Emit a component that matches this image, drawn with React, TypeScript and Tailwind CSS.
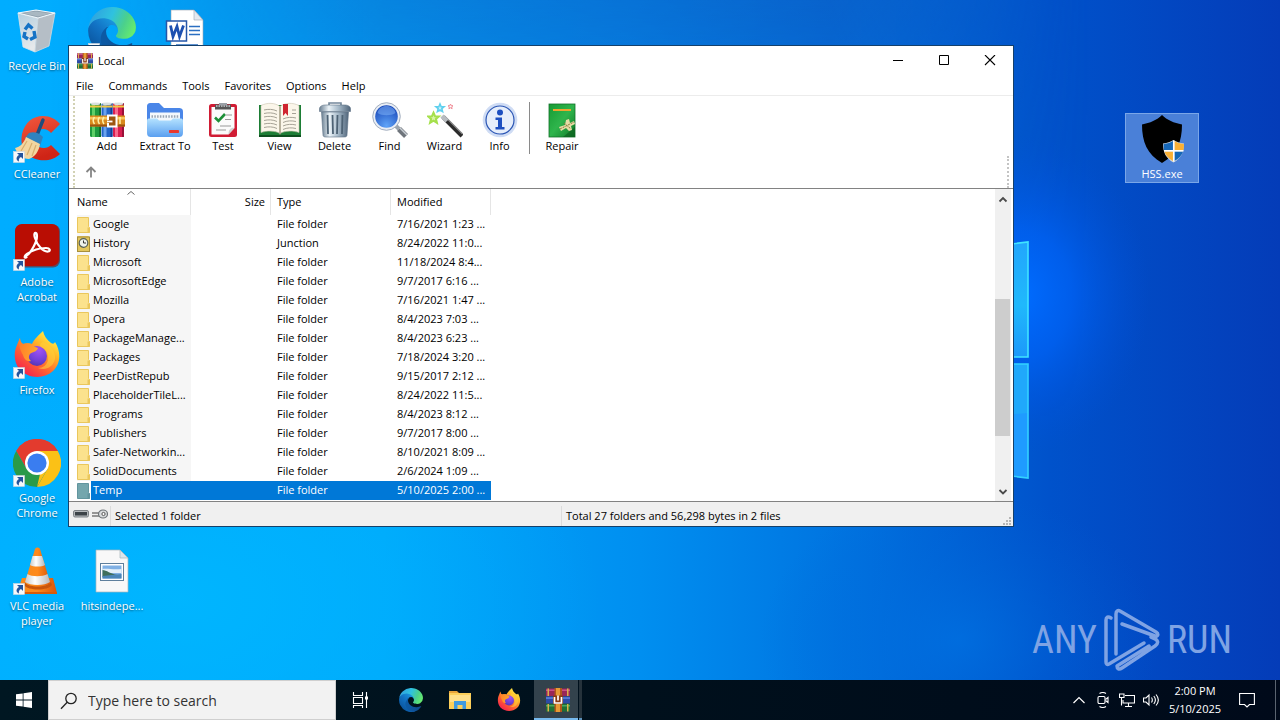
import React from "react";

type IconProps = { className?: string };

/* ---------- Wallpaper ---------- */

function Wallpaper() {
  return (
    <svg
      className="absolute inset-0 h-full w-full"
      viewBox="0 0 1280 720"
      preserveAspectRatio="xMidYMid slice"
      aria-hidden="true"
    >
      <defs>
        <linearGradient id="wall-base" x1="0" y1="0" x2="1" y2="0">
          <stop offset="0" stopColor="#00adff" />
          <stop offset="0.3" stopColor="#00a8fb" />
          <stop offset="0.5" stopColor="#008ff0" />
          <stop offset="0.68" stopColor="#0070de" />
          <stop offset="0.82" stopColor="#0052cb" />
          <stop offset="1" stopColor="#043cb8" />
        </linearGradient>
        <linearGradient id="wall-top" x1="0" y1="0" x2="0" y2="1">
          <stop offset="0" stopColor="#1050b8" stopOpacity="0.75" />
          <stop offset="0.35" stopColor="#1050b8" stopOpacity="0.2" />
          <stop offset="0.6" stopColor="#1050b8" stopOpacity="0" />
        </linearGradient>
        <linearGradient id="wall-mask-x" x1="0" y1="0" x2="1" y2="0">
          <stop offset="0.04" stopColor="#000" />
          <stop offset="0.3" stopColor="#888" />
          <stop offset="0.65" stopColor="#aaa" />
          <stop offset="0.85" stopColor="#000" />
        </linearGradient>
        <mask id="wall-mask">
          <rect width="1280" height="720" fill="url(#wall-mask-x)" />
        </mask>
        <radialGradient id="wall-glow">
          <stop offset="0" stopColor="#006cff" />
          <stop offset="0.4" stopColor="#0062f6" stopOpacity="0.75" />
          <stop offset="1" stopColor="#0050d8" stopOpacity="0" />
        </radialGradient>
        <radialGradient id="wall-low">
          <stop offset="0" stopColor="#00b8ff" stopOpacity="0.8" />
          <stop offset="1" stopColor="#00b4ff" stopOpacity="0" />
        </radialGradient>
        <radialGradient id="wall-floor">
          <stop offset="0" stopColor="#0074e4" stopOpacity="0.6" />
          <stop offset="1" stopColor="#0060d4" stopOpacity="0" />
        </radialGradient>
        <linearGradient id="pane-top" x1="0" y1="0" x2="0" y2="1">
          <stop offset="0" stopColor="#22a6fc" />
          <stop offset="0.55" stopColor="#20b8fc" />
          <stop offset="1" stopColor="#1c98fa" />
        </linearGradient>
      </defs>
      <rect width="1280" height="720" fill="url(#wall-base)" />
      <rect width="1280" height="720" fill="url(#wall-top)" mask="url(#wall-mask)" />
      <ellipse cx="180" cy="600" rx="420" ry="260" fill="url(#wall-low)" />
      <ellipse cx="960" cy="640" rx="200" ry="150" fill="url(#wall-floor)" />
      <ellipse cx="1020" cy="295" rx="130" ry="160" fill="url(#wall-glow)" />
      <path d="M860 262 1028 242V357H860Z" fill="url(#pane-top)" />
      <path d="M860 262 1028 242V357H860" fill="none" stroke="#3fe4ff" strokeWidth="1.6" />
      <path d="M860 364H1028V478L860 458Z" fill="#1f9bff" />
      <path d="M860 364H1028V413L860 426Z" fill="#20a8fb" />
      <path d="M860 364H1028V478L860 458" fill="none" stroke="#32d2ff" strokeWidth="1.6" />
    </svg>
  );
}

/* ---------- Application icons ---------- */

function EdgeIcon({ className }: IconProps) {
  return (
    <svg className={className} viewBox="4.6 4.9 256 257" aria-hidden="true">
      <defs>
        <linearGradient id="edge-a" x1="0.2" y1="0.6" x2="1" y2="0.6">
          <stop offset="0" stopColor="#0c59a4" />
          <stop offset="1" stopColor="#114a8b" />
        </linearGradient>
        <linearGradient id="edge-b" x1="0.9" y1="0.1" x2="0.3" y2="0.9">
          <stop offset="0" stopColor="#1b9de2" />
          <stop offset="0.5" stopColor="#1272c4" />
          <stop offset="1" stopColor="#0a56a0" />
        </linearGradient>
        <linearGradient id="edge-c" x1="0" y1="0.3" x2="1" y2="0.6">
          <stop offset="0" stopColor="#2f9fe0" />
          <stop offset="0.45" stopColor="#2fc2df" />
          <stop offset="0.75" stopColor="#4bd08c" />
          <stop offset="1" stopColor="#66eb6e" />
        </linearGradient>
      </defs>
      <path
        fill="url(#edge-a)"
        d="M235.68 199.15a93.73 93.73 0 0 1-10.54 4.71 101.87 101.87 0 0 1-35.9 6.46c-47.32 0-88.54-32.55-88.54-74.32A31.48 31.48 0 0 1 117.13 108.7c-42.8 1.8-53.8 46.4-53.8 72.53 0 73.88 68.09 81.37 82.76 81.37 7.91 0 19.84-2.3 27-4.56l1.31-.44a128.34 128.34 0 0 0 66.6-52.8 4 4 0 0 0-5.32-5.65z"
      />
      <path
        fill="url(#edge-b)"
        d="M110.34 246.34A79.2 79.2 0 0 1 87.6 225a80.72 80.72 0 0 1 29.53-120c3.12-1.47 8.45-4.13 15.54-4a32.35 32.35 0 0 1 25.69 13 31.88 31.88 0 0 1 6.36 18.66c0-.21 24.46-79.6-80-79.6-43.9 0-80 41.66-80 78.21a130.15 130.15 0 0 0 12.11 56 128 128 0 0 0 156.38 67.11 75.55 75.55 0 0 1-62.78-8z"
      />
      <path
        fill="url(#edge-c)"
        d="M156.94 153.78c-.81 1.05-3.3 2.5-3.3 5.66 0 2.61 1.7 5.12 4.72 7.23 14.38 10 41.49 8.68 41.56 8.68a59.56 59.56 0 0 0 30.27-8.35A61.38 61.38 0 0 0 260.63 114c.26-22.41-8-37.31-11.34-43.91-21.19-41.45-66.93-65.29-116.67-65.29a128 128 0 0 0-128 126.2c.48-36.54 36.8-66.05 80-66.05 3.5 0 23.46.34 42 10.07 16.34 8.58 24.9 18.94 30.85 29.21 6.18 10.67 7.28 24.15 7.28 29.52s-2.74 13.33-7.8 19.9z"
      />
    </svg>
  );
}

function FirefoxIcon({ className }: IconProps) {
  return (
    <svg className={className} viewBox="0 0 48 48" aria-hidden="true">
      <defs>
        <linearGradient id="fx-body" x1="0.85" y1="0.1" x2="0.2" y2="0.95">
          <stop offset="0" stopColor="#fff04a" />
          <stop offset="0.3" stopColor="#ffb627" />
          <stop offset="0.6" stopColor="#ff6a2f" />
          <stop offset="1" stopColor="#f5204f" />
        </linearGradient>
        <radialGradient id="fx-globe" cx="0.6" cy="0.2" r="0.9">
          <stop offset="0" stopColor="#a152f5" />
          <stop offset="0.6" stopColor="#7040d8" />
          <stop offset="1" stopColor="#4c34a8" />
        </radialGradient>
        <linearGradient id="fx-flame" x1="0" y1="0" x2="1" y2="0.4">
          <stop offset="0" stopColor="#ff7a28" />
          <stop offset="1" stopColor="#ffa52c" />
        </linearGradient>
      </defs>
      <path
        fill="url(#fx-body)"
        d="M7 7C7 10 8 12 10 13c3-1 6-1 9 0C21 8 26 4 30 0c1 5 4 9 8 12 2 1 3 1 4-1 6 9 6 22-2 29-10 9-25 7-33-1C0 31 1 20 4 14c1-3 2-5 3-7Z"
      />
      <circle cx="24" cy="25" r="10" fill="url(#fx-globe)" />
      <path
        fill="url(#fx-flame)"
        d="M7 7c0 3 1 5 3 6 3-1 6-1 9 0 1 2 3 3 6 4-1 4-6 4-8 6-2 3-1 5 1 7-4 1-7-2-8-6-3-5-5-11-3-17Z"
      />
      <path fill="#ffcf3a" d="M28 16c5 2 8 7 7 13-1 5-5 8-10 8 8 3 15-1 17-9 1-7-4-13-12-17-3 1-4 3-2 5Z" opacity="0.6" />
    </svg>
  );
}

function ChromeIcon({ className }: IconProps) {
  return (
    <svg className={className} viewBox="0 0 48 48" aria-hidden="true">
      <path fill="#e33b2e" d="M24 24 3.2 12A24 24 0 0 1 44.8 12L24 12Z" />
      <path fill="#e33b2e" d="M3.2 12A24 24 0 0 1 44.8 12H24L13.6 30Z" />
      <path fill="#fbc116" d="M44.8 12A24 24 0 0 1 24 48L34.4 30 24 12Z" />
      <path fill="#2a9a48" d="M24 48A24 24 0 0 1 3.2 12L13.6 30 34.4 30Z" />
      <path fill="#fbc116" d="M34.4 30 24 48 30 22Z" />
      <circle cx="24" cy="24" r="12" fill="#fff" />
      <circle cx="24" cy="24" r="9.6" fill="#3a7df0" />
    </svg>
  );
}

function AcrobatIcon({ className }: IconProps) {
  return (
    <svg className={className} viewBox="0 0 48 48" aria-hidden="true">
      <rect x="2" y="1.5" width="45" height="43" rx="7" fill="#8e0d02" opacity="0.6" />
      <rect x="2" y="1" width="44" height="42" rx="7" fill="#b90d03" />
      <path
        d="M13 33C17 31 26 17 23.500 10.500C22 8.500 20.500 11 22 15C24 22 30 29 35 28.500C38 28 37 25 33 25C26 25 19 27.500 14 31C10 34 12 36 14 33.500"
        fill="none"
        stroke="#fff"
        strokeWidth="2.2"
        strokeLinejoin="round"
      />
    </svg>
  );
}

function CCleanerIcon({ className }: IconProps) {
  return (
    <svg className={className} viewBox="0 0 48 48" aria-hidden="true">
      <defs>
        <linearGradient id="cc-red" x1="0" y1="0" x2="0.3" y2="1">
          <stop offset="0" stopColor="#f2593e" />
          <stop offset="1" stopColor="#cf2416" />
        </linearGradient>
      </defs>
      <path
        fill="url(#cc-red)"
        d="M47 9 38 18C34 13 27 13 24 17c-4 5-3 12 2 15 5 2 9 1 12-2l9 9C40 46 29 47 20 43 10 38 7 29 9 19 12 7 20 1 30 1c7 0 13 3 17 8Z"
      />
      <path d="M30 5 24 20" stroke="#214d7c" strokeWidth="3.4" strokeLinecap="round" />
      <path fill="#2f83be" d="M16 18c5-2 10 0 14 4l-3 9-15-8Z" />
      <path fill="#f3d6a0" d="M13 22 27 29C26 36 22 42 16 44 10 44 5 40 2 33c5-1 9-5 11-11Z" />
      <path d="M14 26 8 36M19 28l-5 12M23 30l-4 11" stroke="#d9ae6c" strokeWidth="1.2" />
    </svg>
  );
}

function VlcIcon({ className }: IconProps) {
  return (
    <svg className={className} viewBox="0 0 48 48" aria-hidden="true">
      <defs>
        <linearGradient id="vlc-o" x1="0" y1="0" x2="1" y2="0">
          <stop offset="0" stopColor="#f78a1d" />
          <stop offset="0.5" stopColor="#ff8a1c" />
          <stop offset="1" stopColor="#d9560a" />
        </linearGradient>
        <linearGradient id="vlc-w" x1="0" y1="0" x2="1" y2="0">
          <stop offset="0" stopColor="#c9c9c9" />
          <stop offset="0.4" stopColor="#fff" />
          <stop offset="1" stopColor="#b8b8b8" />
        </linearGradient>
      </defs>
      <path fill="url(#vlc-o)" d="M9 31h31l4 15H4Z" />
      <path fill="#d95b08" d="M4 45h40v2H4Z" />
      <path fill="#c9560c" d="M12 35c3 6 22 6 26 0l1 3c-4 6-24 6-28 0Z" />
      <path fill="url(#vlc-o)" d="M22 2c1-2 4-2 5 0l10 33c-1 5-24 5-25 0Z" />
      <path fill="url(#vlc-w)" d="M19.500 9h9.500l3 9c-3 2-12 2-15 0Z" />
      <path fill="url(#vlc-w)" d="M14.500 27c4 3 15 3 20 0l2.500 8c-5 4-20 4-25 0Z" />
    </svg>
  );
}

function RecycleBinIcon({ className }: IconProps) {
  return (
    <svg className={className} viewBox="0 0 48 48" aria-hidden="true">
      <defs>
        <linearGradient id="bin-face" x1="0" y1="0" x2="0.3" y2="1">
          <stop offset="0" stopColor="#b4cede" />
          <stop offset="1" stopColor="#e6e9eb" />
        </linearGradient>
      </defs>
      <path fill="url(#bin-face)" stroke="#d6e5ee" strokeWidth="0.8" d="M5 6 25 11 22 45 10 40Z" />
      <path fill="#b5bec6" stroke="#cfd9df" strokeWidth="0.8" d="M25 11 42 6 36 39 22 45Z" />
      <path fill="#8fa0ad" stroke="#f1f7fb" strokeWidth="1.2" d="M5 6 23 3l19 3-17 5Z" />
      <path fill="#a9b8c2" d="M10 6 23 4.500 38 6.500 25 9.500Z" />
      <g fill="none" stroke="#1673c5" strokeWidth="3.400">
        <path d="M12 22.500l3.500-4.500 4 3.500" />
        <path d="M21 24l1 6-5 2.500" />
        <path d="M15 32l-4-2.500 1-4.500" />
      </g>
    </svg>
  );
}

function WordDocIcon({ className }: IconProps) {
  return (
    <svg className={className} viewBox="0 0 48 48" aria-hidden="true">
      <path fill="#fff" stroke="#9aa6b2" strokeWidth="0.6" d="M8 3h23l9 10v34H8Z" />
      <path fill="#e4e9f0" stroke="#9aa6b2" strokeWidth="0.6" d="M31 3v10h9Z" />
      <path d="M26 19.500h11M26 23.500h11M26 27.500h11M13 38h22M13 42h22" stroke="#2b6fc2" strokeWidth="1.4" />
      <rect x="3.500" y="14" width="20" height="20" fill="#fff" stroke="#2456a8" strokeWidth="1.5" />
      <path d="M7.500 18.500 10 29.500 14 19.500 16.500 29.500 20.500 18.500" fill="none" stroke="#1d50b0" strokeWidth="2.8" />
    </svg>
  );
}

function PictureDocIcon({ className }: IconProps) {
  return (
    <svg className={className} viewBox="0 0 48 48" aria-hidden="true">
      <path fill="#f8f8f8" stroke="#a8b4bc" strokeWidth="0.7" d="M8 3h24l8 8v34H8Z" />
      <path fill="#dde6ec" stroke="#a8b4bc" strokeWidth="0.7" d="M32 3v8h8Z" />
      <rect x="12.500" y="16.500" width="23" height="17" fill="#fff" stroke="#5f7f9c" strokeWidth="1" />
      <rect x="14.500" y="18.500" width="19" height="13" fill="#7fb0e4" />
      <path fill="#e2eff9" d="M14.500 22c5-1 10 1 19 0v4h-19Z" />
      <path fill="#3f6f5a" d="M14.500 23c4 0 8 4 15 5l-15 2Z" />
      <path fill="#4a86b8" d="M14.500 29l19-2v4.500h-19Z" />
    </svg>
  );
}

function ShieldExeIcon({ className }: IconProps) {
  return (
    <svg className={className} viewBox="0 0 48 48" aria-hidden="true">
      <path
        fill="#000"
        d="M24 0c5 5 12 8 20 9.500 0 17-5 30-20 38.500C9 39.500 4 26.500 4 9.500 12 8 19 5 24 0Z"
      />
      <path fill="#cfd6dd" d="M35.500 25c3 2 6 3 10.500 3.500 0 9-3 15-10.500 19C28 43.500 25 37.500 25 28.500 29.500 28 32.500 27 35.500 25Z" />
      <path fill="#1667b8" d="M35 26v9h-9c-.4-2-.4-4-.4-6C30 28.500 32.500 27.500 35 26Z" />
      <path fill="#fbb034" d="M36.500 26v9h9c.4-2 .4-4 .4-6-4.400-.5-6.900-1.500-9.400-3Z" />
      <path fill="#fbb034" d="M35 36.500V46c-4.500-2.500-7.300-5.500-8.600-9.500Z" />
      <path fill="#1667b8" d="M36.500 36.500V46c4.500-2.500 7.300-5.500 8.600-9.500Z" />
      <path d="M35.700 25.500V46.500M26 35.700H45.500" stroke="#fff" strokeWidth="1.5" />
    </svg>
  );
}

function BooksIcon({ className }: IconProps) {
  return (
    <svg className={className} viewBox="0 0 24 24" aria-hidden="true">
      <rect x="0" y="0.500" width="24" height="7.500" fill="#9a2658" />
      <rect x="0" y="1.500" width="24" height="1.500" fill="#c94f86" />
      <rect x="0" y="8.300" width="24" height="7.200" fill="#2d4ba6" />
      <rect x="0" y="9.300" width="24" height="1.500" fill="#5f83e0" />
      <rect x="0" y="15.800" width="24" height="7.700" fill="#1f6f35" />
      <rect x="0" y="17" width="24" height="1.500" fill="#49a85c" />
      <path fill="#d9b04c" d="M1.500.5h1.500v7.500H1.500zM21 .5h1.500v7.500H21zM1.500 16h1.500v7.500H1.500zM21 16h1.500v7.500H21z" />
      <path fill="#b0571b" d="M8.500 0h7.500v24H8.500z" />
      <path fill="#e79a35" d="M10 0h4v24h-4z" />
      <rect x="7" y="7.500" width="10" height="8.500" rx="1" fill="#8a3a12" />
      <path d="M8.500 9v6h7V9M12 7.500v5" fill="none" stroke="#fff" strokeWidth="1.700" />
    </svg>
  );
}

/* ---------- Toolbar icons ---------- */

function AddIcon() {
  const spines = [
    { x: 1, main: "#1d9a3f", light: "#6fdc72", dark: "#0f6f28" },
    { x: 12.5, main: "#2364c8", light: "#7bb2f8", dark: "#123f96" },
    { x: 24, main: "#d81f50", light: "#ff7d9d", dark: "#9a1038" },
  ];
  return (
    <svg className="h-9 w-9" viewBox="0 0 36 36" aria-hidden="true">
      {spines.map((s) => (
        <g key={s.x}>
          <rect x={s.x} y="1" width="11" height="34" rx="1.500" fill={s.main} />
          <rect x={s.x + 2} y="1" width="3" height="34" fill={s.light} opacity="0.8" />
          <rect x={s.x + 9} y="1" width="2" height="34" fill={s.dark} />
          <rect x={s.x} y="3.500" width="11" height="2" fill="#f3c843" />
          <ellipse cx={s.x + 5.5} cy="1.800" rx="5" ry="1.200" fill="#d8e0e0" />
        </g>
      ))}
      <path fill="#d98a1e" d="M1 13.500h35v11H1z" />
      <path fill="#f8c65c" d="M1 15h35v2.500H1z" />
      <path fill="#9d5510" d="M1 22.500h35v2H1z" />
      <path d="M5.500 15c-1.500 2-1.500 5 0 7M10.500 15c-1.500 2-1.500 5 0 7M15 15c-1.500 2-1.500 5 0 7M31 15v7" fill="none" stroke="#fff0a8" strokeWidth="1.500" />
      <path d="M19 18v-4.500h8.500v11H19V21" fill="#9d5510" stroke="#fff" strokeWidth="2" />
      <path d="M18 19.500h5.500" stroke="#fff" strokeWidth="1.800" />
    </svg>
  );
}

function ExtractIcon() {
  return (
    <svg className="h-9 w-9" viewBox="0 0 36 36" aria-hidden="true">
      <defs>
        <linearGradient id="ext-front" x1="0" y1="0" x2="0" y2="1">
          <stop offset="0" stopColor="#b4e2ff" />
          <stop offset="1" stopColor="#5a9ff0" />
        </linearGradient>
      </defs>
      <path fill="#4a86e8" d="M0 5c0-3 1-4 4-4h8l5 5h14c4 0 5 1 5 4v14H0Z" />
      <path fill="#f4f8fc" d="M3 10.500h30v10H3z" />
      <path d="M4.500 14.500h27" stroke="#9aa6b4" strokeWidth="2.500" strokeDasharray="1.500 1.300" />
      <path fill="url(#ext-front)" d="M0 19c0-2 1-2.500 3-2.500h7l2 2h12l2-2h7c2 0 3 .5 3 2.500v11c0 4-1 5-5 5H5c-4 0-5-1-5-5Z" />
      <rect x="22" y="28" width="10" height="3" rx="0.800" fill="#e8382f" />
    </svg>
  );
}

function TestIcon() {
  return (
    <svg className="h-9 w-9" viewBox="0 0 36 36" aria-hidden="true">
      <rect x="4" y="2" width="28" height="33" rx="2.500" fill="#d01c34" />
      <path fill="#fbfbfb" d="M6.500 5h23v21l-6 6.500h-17Z" />
      <path fill="#d0d0d0" d="M29.500 26c-3-1-6 1-6 6.500Z" />
      <path fill="#555" d="M10 2.500h16v5H10z" />
      <path d="M11 4h14" stroke="#c9ced2" strokeWidth="1.500" strokeDasharray="1.500 1" />
      <path fill="#9aa0a6" d="M14 1h8v2.500h-8z" />
      <path d="M10 15.500l3.500 3.500 6.500-7" fill="none" stroke="#1c8f37" strokeWidth="2.600" />
      <path d="M21 13h6M20 17.500h6M15 24h11M11 28h10" stroke="#9a9a9a" strokeWidth="1.200" />
    </svg>
  );
}

function ViewIcon() {
  return (
    <svg className="h-9 w-[42px]" viewBox="0 0 42 36" aria-hidden="true">
      <path fill="#1d7d35" d="M0 3h42v31H0Z" />
      <path fill="#0e4f1f" d="M0 33h42v2H0Z" />
      <path fill="#fbf6ea" stroke="#c9c2ae" strokeWidth="0.600" d="M2 3.500c6-3 14-3 19 1v27c-5-3-13-3-19-1ZM40 3.500c-6-3-14-3-19 1v27c5-3 13-3 19-1Z" />
      <path d="M5 8c4-1 9-1 13 1M5 11.500c4-1 9-1 13 1M5 15c4-1 9-1 13 1M5 18.500c4-1 9-1 13 1M5 22c4-1 9-1 13 1M5 25.500c4-1 9-1 13 1M33 8h4M33 11.500h4M24 17c4-2 9-2 13-1M24 20.500c4-2 9-2 13-1M24 24c4-2 9-2 13-1M24 27.500c4-2 9-2 13-1" fill="none" stroke="#a6a296" strokeWidth="1" />
      <path d="M21 4.500v28" stroke="#9d967f" strokeWidth="1.200" />
      <path fill="#cf2430" d="M24 2h5v12l-2.500-3L24 14Z" />
    </svg>
  );
}

function DeleteIcon() {
  return (
    <svg className="h-9 w-9" viewBox="0 0 36 36" aria-hidden="true">
      <defs>
        <linearGradient id="can" x1="0" y1="0" x2="1" y2="0">
          <stop offset="0" stopColor="#6b8092" />
          <stop offset="0.300" stopColor="#eaf2f7" />
          <stop offset="0.600" stopColor="#a9bccb" />
          <stop offset="1" stopColor="#50657a" />
        </linearGradient>
      </defs>
      <path d="M12 3V1h12v2" fill="none" stroke="#73879a" strokeWidth="1.600" />
      <path fill="url(#can)" stroke="#5c7084" strokeWidth="0.600" d="M2.500 7c0-3 3-4 6-4h19c3 0 6 1 6 4v2.500h-31Z" />
      <path fill="url(#can)" stroke="#5c7084" strokeWidth="0.600" d="M4.500 10h27l-1.500 23c0 1.500-1 2-3 2H9c-2 0-3-.5-3-2Z" />
      <path d="M10.500 13l.5 19M15.500 13l.5 19M20.500 13l-.5 19M25.500 13l-.5 19" stroke="#4d6274" strokeWidth="1.800" />
    </svg>
  );
}

function FindIcon() {
  return (
    <svg className="h-9 w-9" viewBox="0 0 36 36" aria-hidden="true">
      <defs>
        <radialGradient id="lens" cx="0.500" cy="0.900" r="0.900">
          <stop offset="0" stopColor="#5fa4f8" />
          <stop offset="1" stopColor="#1746b8" />
        </radialGradient>
      </defs>
      <path d="M24 24l3 3" stroke="#9aa4ae" strokeWidth="4" />
      <path d="M27 27l7 7" stroke="#6f757c" strokeWidth="5.500" />
      <path d="M28 26l7 7" stroke="#c8ced4" strokeWidth="1.500" />
      <circle cx="14.500" cy="14.500" r="13.800" fill="#e9eef5" stroke="#8f9db0" strokeWidth="0.800" />
      <circle cx="14.500" cy="14.500" r="11.300" fill="url(#lens)" />
      <path fill="#8fc2ff" opacity="0.450" d="M5.500 11c1-5 5-7 9-7s8 2 9 7c-4 3-14 3-18 0Z" />
    </svg>
  );
}

const STAR = "M0-5 1.500-1.600 5-1.500 2.300.8 3.200 4.500 0 2.500-3.200 4.500-2.300.8-5-1.500-1.500-1.600Z";

function WizardIcon() {
  return (
    <svg className="h-9 w-9" viewBox="0 0 36 36" aria-hidden="true">
      <path d={STAR} transform="translate(6.500 16) scale(1.050)" fill="#d9f6a8" stroke="#a5e04c" strokeWidth="2" />
      <path d={STAR} transform="translate(13 6) scale(.8)" fill="#c9f2fd" stroke="#5fd0ee" strokeWidth="2" />
      <path d={STAR} transform="translate(23.500 4.500) scale(.5)" fill="#fff" stroke="#f08a94" strokeWidth="2" />
      <path d="M16 15l19 19" stroke="#2b2b2b" strokeWidth="4" />
      <path d="M17.500 14l18 18" stroke="#8a8a8a" strokeWidth="1.200" />
      <path d="M15 14l5 5" stroke="#b8bcc0" strokeWidth="4.500" />
    </svg>
  );
}

function InfoIcon() {
  return (
    <svg className="h-9 w-9" viewBox="0 0 36 36" aria-hidden="true">
      <circle cx="18" cy="18" r="17.300" fill="#cfdcf4" />
      <circle cx="18" cy="18" r="14" fill="#e6eefb" stroke="#2a55b4" strokeWidth="1.200" />
      <circle cx="18" cy="10.500" r="3" fill="#1d4fc0" />
      <path fill="#1d4fc0" d="M13.500 15.500h6.500V25H22.500v2.500H13.500v-2.500h2.500v-7H13.500Z" />
    </svg>
  );
}

function RepairIcon() {
  return (
    <svg className="h-9 w-9" viewBox="0 0 36 36" aria-hidden="true">
      <defs>
        <linearGradient id="rep" x1="0" y1="0" x2="1" y2="1">
          <stop offset="0" stopColor="#169a33" />
          <stop offset="0.500" stopColor="#2fb54c" />
          <stop offset="1" stopColor="#0f7a28" />
        </linearGradient>
      </defs>
      <rect x="5" y="2" width="26" height="33" fill="url(#rep)" stroke="#12702a" strokeWidth="0.800" />
      <path d="M9 8h18" stroke="#f0a52e" strokeWidth="2" />
      <path fill="#0b5c1d" d="M31 25v10H19Z" opacity="0.600" />
      <path fill="#e9dca6" d="M15 25l6-2 1-5 3-1 1 4 4-2 1 3-4 2 1 4-3 1-3-3-5 3Z" />
      <path d="M16 27 30 20M20 21l7 6" stroke="#8b7a3e" strokeWidth="1" strokeDasharray="2 1" />
    </svg>
  );
}

/* ---------- Small glyphs ---------- */

function ShortcutBadge() {
  return (
    <svg className="absolute bottom-0 left-0 h-3 w-3" viewBox="0 0 12 12" aria-hidden="true">
      <rect x="0.500" y="0.500" width="11" height="11" fill="#f6f8fa" stroke="#cdd6de" strokeWidth="0.600" />
      <path fill="#24549c" d="M4 2h6v6L8 6C6 7 5.500 8.500 6 10.500 3 9.500 2.500 6 6 4Z" />
    </svg>
  );
}

function FolderRowIcon({ kind }: { kind: "folder" | "junction" | "selected" }) {
  const fill = kind === "selected" ? "#74a6ad" : "#fbe28d";
  const edge = kind === "selected" ? "#62959e" : "#eac75c";
  return (
    <svg className="h-4 w-[14px] shrink-0" viewBox="0 0 14 16" aria-hidden="true">
      <path fill={fill} stroke={edge} strokeWidth="1" d="M.5.5h11v9l1 1v5H.5Z" />
      <path fill={edge} d="M10.500 10.500h2.500v5h-2.500z" />
      {kind === "junction" && (
        <g>
          <rect x="0.500" y="1" width="12" height="14.500" fill="#e3c65c" stroke="#a8903c" strokeWidth="1" />
          <circle cx="6.500" cy="7" r="4.300" fill="#eef2ec" stroke="#55605a" strokeWidth="1.200" />
          <path d="M6.500 4.500V7h2.500" fill="none" stroke="#333" strokeWidth="1" />
        </g>
      )}
    </svg>
  );
}

/* ---------- Desktop ---------- */

type DesktopItem = {
  label: string;
  Icon: (p: IconProps) => React.ReactElement;
  shortcut?: boolean;
  cell: string;
};

const desktopItems: DesktopItem[] = [
  { label: "Recycle Bin", Icon: RecycleBinIcon, cell: "col-start-1 row-start-1" },
  { label: "CCleaner", Icon: CCleanerIcon, shortcut: true, cell: "col-start-1 row-start-2" },
  { label: "Adobe Acrobat", Icon: AcrobatIcon, shortcut: true, cell: "col-start-1 row-start-3" },
  { label: "Firefox", Icon: FirefoxIcon, shortcut: true, cell: "col-start-1 row-start-4" },
  { label: "Google Chrome", Icon: ChromeIcon, shortcut: true, cell: "col-start-1 row-start-5" },
  { label: "VLC media player", Icon: VlcIcon, shortcut: true, cell: "col-start-1 row-start-6" },
  { label: "", Icon: EdgeIcon, shortcut: true, cell: "col-start-2 row-start-1" },
  { label: "hitsindepe...", Icon: PictureDocIcon, cell: "col-start-2 row-start-6" },
  { label: "", Icon: WordDocIcon, cell: "col-start-3 row-start-1" },
];

function DesktopIcons() {
  return (
    <ul className="relative grid auto-rows-[108px] grid-cols-[74px_74px_74px] gap-x-px pt-[7px] text-white">
      {desktopItems.map(({ label, Icon, shortcut, cell }, i) => (
        <li key={i} className={`flex flex-col items-center gap-[3px] ${cell}`}>
          <span className="relative h-12 w-12">
            <Icon className="h-12 w-12" />
            {shortcut && <ShortcutBadge />}
          </span>
          <span className="px-1 text-center leading-[15px] [text-shadow:0_1px_2px_rgb(0_0_0/0.5)]">{label}</span>
        </li>
      ))}
    </ul>
  );
}

function Watermark() {
  return (
    <div className="absolute right-12 bottom-2 flex items-center gap-[7px] font-['Roboto_Condensed','Roboto',sans-serif] text-[38px] leading-none font-normal text-[#7fa3e4]">
      <span>ANY</span>
      <svg className="h-16 w-14" viewBox="0 0 56 64" fill="none" stroke="#7fa3e4" strokeWidth="3.500" strokeLinejoin="round" strokeLinecap="round" aria-hidden="true">
        <path d="M7 10c-3-2-5-1-5 2v42c0 2 1 3 3 2l35-21" />
        <path d="M12 46V6c0-3 2-4 4-3l36 21c3 2 2 5-1 4L18 16" />
        <path d="M47 29c8 3 8 6 4 9L18 60c-3 2-5 1-5-2l32-20" />
      </svg>
      <span>RUN</span>
    </div>
  );
}

/* ---------- Archiver window ---------- */

const menus = ["File", "Commands", "Tools", "Favorites", "Options", "Help"];

const tools = [
  { label: "Add", Icon: AddIcon, width: "w-[58px]" },
  { label: "Extract To", Icon: ExtractIcon, width: "w-[58px]" },
  { label: "Test", Icon: TestIcon, width: "w-[58px]" },
  { label: "View", Icon: ViewIcon, width: "w-[55px]" },
  { label: "Delete", Icon: DeleteIcon, width: "w-[55px]" },
  { label: "Find", Icon: FindIcon, width: "w-[55px]" },
  { label: "Wizard", Icon: WizardIcon, width: "w-[55px]" },
  { label: "Info", Icon: InfoIcon, width: "w-[55px]" },
];

const rows = [
  ["Google", "File folder", "7/16/2021 1:23 ..."],
  ["History", "Junction", "8/24/2022 11:0..."],
  ["Microsoft", "File folder", "11/18/2024 8:4..."],
  ["MicrosoftEdge", "File folder", "9/7/2017 6:16 ..."],
  ["Mozilla", "File folder", "7/16/2021 1:47 ..."],
  ["Opera", "File folder", "8/4/2023 7:03 ..."],
  ["PackageManage...", "File folder", "8/4/2023 6:23 ..."],
  ["Packages", "File folder", "7/18/2024 3:20 ..."],
  ["PeerDistRepub", "File folder", "9/15/2017 2:12 ..."],
  ["PlaceholderTileL...", "File folder", "8/24/2022 11:5..."],
  ["Programs", "File folder", "8/4/2023 8:12 ..."],
  ["Publishers", "File folder", "9/7/2017 8:00 ..."],
  ["Safer-Networkin...", "File folder", "8/10/2021 8:09 ..."],
  ["SolidDocuments", "File folder", "2/6/2024 1:09 ..."],
  ["Temp", "File folder", "5/10/2025 2:00 ..."],
];

function TitleBar() {
  return (
    <header className="flex h-[30px] items-center pl-2">
      <BooksIcon className="h-4 w-4" />
      <h1 className="ml-[5px] flex-1">Local</h1>
      <button aria-label="Minimize" className="flex h-full w-[46px] items-center justify-center">
        <svg className="h-3 w-3" viewBox="0 0 12 12" stroke="#000" aria-hidden="true">
          <path d="M1 5.500h10" />
        </svg>
      </button>
      <button aria-label="Maximize" className="flex h-full w-[46px] items-center justify-center">
        <svg className="h-3 w-3" viewBox="0 0 12 12" fill="none" stroke="#000" aria-hidden="true">
          <path d="M1.500.5h9v9h-9z" />
        </svg>
      </button>
      <button aria-label="Close" className="flex h-full w-[46px] items-center justify-center">
        <svg className="h-3 w-3" viewBox="0 0 12 12" stroke="#000" strokeWidth="1.100" aria-hidden="true">
          <path d="M1 0l10 10M11 0 1 10" />
        </svg>
      </button>
    </header>
  );
}

function ToolButton({ label, Icon, width }: { label: string; Icon: () => React.ReactElement; width: string }) {
  return (
    <button className={`flex flex-col items-center ${width}`}>
      <Icon />
      <span className="leading-4 whitespace-nowrap">{label}</span>
    </button>
  );
}

function Toolbar() {
  return (
    <div className="flex border-t border-[#ececec]">
      <div className="ml-1 border-l-2 border-dotted border-[#d2d2b4]" />
      <div className="flex-1">
        <div className="flex pt-1.5 pl-[3px]">
          {tools.map((t) => (
            <ToolButton key={t.label} {...t} />
          ))}
          <div className="mr-[3px] ml-0.5 w-px self-stretch bg-[#8a8a8a]" />
          <ToolButton label="Repair" Icon={RepairIcon} width="w-[58px]" />
        </div>
        <div className="flex h-[34px] items-center justify-between px-1 pt-0.5">
          <button aria-label="Up one level" className="flex h-6 w-6 items-center justify-center">
            <svg className="h-3 w-3" viewBox="0 0 12 12" fill="none" stroke="#858585" strokeWidth="1.800" aria-hidden="true">
              <path d="M6 11.500V1.500M1.500 6 6 1.500 10.500 6" />
            </svg>
          </button>
          <div className="h-full border-l-2 border-dotted border-[#c4c4c4]" />
        </div>
      </div>
    </div>
  );
}

function FileTable() {
  return (
    <table className="w-[421px] table-fixed border-separate border-spacing-0 self-start text-left">
      <colgroup>
        <col className="w-[121px]" />
        <col className="w-[80px]" />
        <col className="w-[120px]" />
        <col className="w-[100px]" />
      </colgroup>
      <thead>
        <tr className="h-[26px]">
          <th className="relative border-r border-[#e5e5e5] p-0 pl-[7px] font-normal">
            Name
            <svg className="absolute top-0.5 left-[57px] h-1 w-2" viewBox="0 0 8 4" fill="none" stroke="#666" aria-hidden="true">
              <path d="M.5 3.500 4 .5l3.500 3" />
            </svg>
          </th>
          <th className="border-r border-[#e5e5e5] p-0 pr-[5px] text-right font-normal">Size</th>
          <th className="border-r border-[#e5e5e5] p-0 pl-1.5 font-normal">Type</th>
          <th className="border-r border-[#e5e5e5] p-0 pl-1.5 font-normal">Modified</th>
        </tr>
      </thead>
      <tbody>
        {rows.map(([name, type, modified]) => {
          const selected = name === "Temp";
          const tone = selected ? "bg-[#0078d7] text-white" : "";
          return (
            <tr key={name} className="h-[19px]">
              <td className="p-0 pl-[7px]">
                <div className={`flex h-[19px] items-center ${selected ? "" : "bg-[#f6f6f6]"}`}>
                  <FolderRowIcon kind={selected ? "selected" : name === "History" ? "junction" : "folder"} />
                  <span className={`flex h-full flex-1 items-center pl-0.5 whitespace-nowrap ${tone}`}>{name}</span>
                </div>
              </td>
              <td className={`p-0 ${tone}`} />
              <td className={`p-0 pl-1.5 whitespace-nowrap ${tone}`}>{type}</td>
              <td className={`p-0 pl-1.5 whitespace-nowrap ${tone}`}>{modified}</td>
            </tr>
          );
        })}
      </tbody>
    </table>
  );
}

function ScrollBar() {
  return (
    <div className="mr-0.5 flex w-4 flex-col bg-[#f0f0f0]">
      <button aria-label="Scroll up" className="flex h-5 items-center justify-center">
        <svg className="h-2 w-2.5" viewBox="0 0 10 8" fill="none" stroke="#4a4a4a" strokeWidth="1.800" aria-hidden="true">
          <path d="M1.500 6.500l3.500-3.500 3.500 3.500" />
        </svg>
      </button>
      <div className="grow-[90]" />
      <div className="mr-px grow-[138] bg-[#cdcdcd]" />
      <div className="grow-[45]" />
      <button aria-label="Scroll down" className="flex h-5 items-center justify-center">
        <svg className="h-2 w-2.5" viewBox="0 0 10 8" fill="none" stroke="#4a4a4a" strokeWidth="1.800" aria-hidden="true">
          <path d="M1.500 3l3.500 3.500 3.500-3.500" />
        </svg>
      </button>
    </div>
  );
}

function StatusBar() {
  return (
    <footer className="flex h-6 items-center bg-[#f0f0f0] pt-1">
      <div className="flex h-full w-[42px] items-center gap-[3px] border-r border-[#dcdcdc] pb-1 pl-1">
        <svg className="h-2 w-4" viewBox="0 0 16 8" aria-hidden="true">
          <rect x="0.500" y="0.500" width="15" height="6.500" rx="1.500" fill="#b4b8bb" stroke="#7d8286" />
          <rect x="2" y="2" width="12" height="3.500" fill="#3c4348" />
        </svg>
        <svg className="h-3 w-4" viewBox="0 0 16 12" fill="none" aria-hidden="true">
          <path d="M0 5h8M0 8h8" stroke="#777" strokeWidth="1.600" />
          <ellipse cx="11" cy="6" rx="4.500" ry="4" fill="#d9dcde" stroke="#6f7478" strokeWidth="1.200" />
          <circle cx="11.500" cy="6" r="1.600" fill="#fff" stroke="#555" />
        </svg>
      </div>
      <p className="w-[451px] border-r border-[#dcdcdc] pl-1 leading-5">Selected 1 folder</p>
      <p className="flex-1 pl-1 leading-5">Total 27 folders and 56,298 bytes in 2 files</p>
      <svg className="mr-px h-2.5 w-2.5 self-end" viewBox="0 0 10 10" fill="#b5b5b5" aria-hidden="true">
        <path d="M7 1h2v2H7zM4 4h2v2H4zM7 4h2v2H7zM1 7h2v2H1zM4 7h2v2H4zM7 7h2v2H7z" />
      </svg>
    </footer>
  );
}

function ArchiverWindow() {
  return (
    <section
      aria-label="Local"
      className="absolute top-[45px] left-[68px] w-[946px] border border-[#15406a] bg-white text-black"
    >
      <TitleBar />
      <nav className="flex h-[19px] items-center gap-px pt-0.5">
        {menus.map((m) => (
          <button key={m} className="px-[7px]">
            {m}
          </button>
        ))}
      </nav>
      <Toolbar />
      <div className="flex min-h-[314px] justify-between border-y border-[#828282] pl-px">
        <FileTable />
        <ScrollBar />
      </div>
      <StatusBar />
    </section>
  );
}

/* ---------- Taskbar ---------- */

function Taskbar() {
  return (
    <footer className="relative flex h-10 items-stretch bg-linear-to-r from-[#001722] via-[#00101c] to-[#000a1a] text-white">
      <button aria-label="Start" className="flex w-12 items-center justify-center">
        <svg className="h-4 w-4" viewBox="0 0 16 16" fill="#fff" aria-hidden="true">
          <path d="M0 2.300 6.700 1.400V7.600H0ZM7.500 1.200 16 0V7.600H7.500ZM0 8.400H6.700V14.600L0 13.700ZM7.500 8.400H16V16L7.500 14.800Z" />
        </svg>
      </button>
      <label className="flex w-72 items-center gap-2.5 border border-[#cfcfcf] bg-[#f2f2f2] pt-px pl-[11px]">
        <svg className="h-[18px] w-[18px] shrink-0" viewBox="0 0 18 18" fill="none" stroke="#222" strokeWidth="1.300" aria-hidden="true">
          <circle cx="11" cy="6.500" r="5.200" />
          <path d="M7.200 10.300 1 16.800" />
        </svg>
        <input
          aria-label="Type here to search"
          placeholder="Type here to search"
          className="w-full bg-transparent text-sm text-[#222] outline-none placeholder:text-[#333]"
        />
      </label>
      <button aria-label="Task View" className="flex w-12 items-center justify-center">
        <svg className="h-4 w-4" viewBox="0 0 16 16" fill="none" stroke="#fff" strokeWidth="1.100" aria-hidden="true">
          <path d="M1.500 0v3.500h9V0M1.500 5.500h9v6h-9zM1.500 16v-2.500h9V16M14.500 0v16" />
          <path d="M13 4.500h3v3h-3z" fill="#fff" stroke="none" />
        </svg>
      </button>
      <button aria-label="Microsoft Edge" className="ml-0.5 flex w-[49px] items-center justify-center">
        <EdgeIcon className="h-6 w-6" />
      </button>
      <button aria-label="File Explorer" className="flex w-[49px] items-center justify-center">
        <svg className="h-[22px] w-[22px]" viewBox="0 0 22 22" aria-hidden="true">
          <path fill="#e8a43a" d="M0 2h8l2 2H0Z" />
          <path fill="#fccf5a" d="M0 4h22v16H0Z" />
          <path fill="#ffe08a" d="M1 6h20v7H1z" />
          <path fill="#3f9ae0" d="M5 12h12v8h-3.500v-4h-5v4H5Z" />
        </svg>
      </button>
      <button aria-label="Firefox" className="flex w-[49px] items-center justify-center">
        <FirefoxIcon className="h-6 w-6" />
      </button>
      <button
        aria-label="Local"
        className="ml-px flex w-[44px] items-center justify-center border-b-2 border-[#76b9ed] bg-[#33424c] pt-0.5 pl-1"
      >
        <BooksIcon className="h-6 w-6" />
      </button>
      <div className="ml-px w-[3px] border-b-2 border-[#5d93bd] bg-[#25323b]" />
      <div className="ml-auto flex items-center">
        <button aria-label="Show hidden icons" className="flex w-6 justify-center">
          <svg className="h-3 w-3" viewBox="0 0 12 12" fill="none" stroke="#fff" strokeWidth="1.200" aria-hidden="true">
            <path d="M.5 9 6 3.500 11.500 9" />
          </svg>
        </button>
        <button aria-label="Meet Now" className="flex w-6 justify-center">
          <svg className="h-4 w-3" viewBox="0 0 12 16" fill="none" stroke="#fff" strokeWidth="1.100" aria-hidden="true">
            <path d="M2.500 1.500C4.500.3 7 .3 9 1.500M2.500 14.500c2 1.200 4.500 1.200 6.500 0" />
            <rect x="1" y="4.500" width="7" height="7" rx="1.200" />
            <path d="M8.500 7.500 11 5.500v5l-2.500-2" />
          </svg>
        </button>
        <button aria-label="Network" className="flex w-6 justify-center">
          <svg className="h-4 w-4" viewBox="0 0 16 16" fill="none" stroke="#fff" strokeWidth="1.100" aria-hidden="true">
            <path d="M6 3.500h9.500v7.500H4V8M9.500 11v3M6 14.500h7" />
            <path d="M.5 2h4.500v3.500H.5zM2.500 5.500v8" />
          </svg>
        </button>
        <button aria-label="Volume" className="flex w-6 justify-center">
          <svg className="h-4 w-4" viewBox="0 0 16 16" fill="none" stroke="#fff" strokeWidth="1.100" aria-hidden="true">
            <path d="M.5 6h2.500l3-3v10l-3-3H.5zM8.500 5.500c1 1.500 1 3.500 0 5M10.800 4c2 2.500 2 5.500 0 8M13 2.500c3 3.500 3 7.500 0 11" />
          </svg>
        </button>
        <div className="w-16 text-center leading-[18px]">
          <div>2:00 PM</div>
          <div>5/10/2025</div>
        </div>
        <button aria-label="Notifications" className="flex w-10 justify-center">
          <svg className="h-4 w-4" viewBox="0 0 16 16" fill="none" stroke="#fff" strokeWidth="1.100" aria-hidden="true">
            <path d="M.6 1.500h14.800v11H10.500L8 15 5.500 12.500H.6Z" />
          </svg>
        </button>
        <button aria-label="Show desktop" className="ml-2 h-10 w-[5px] border-l border-[#5a6470]" />
      </div>
    </footer>
  );
}

export default function App() {
  return (
    <div className="relative flex min-h-screen flex-col overflow-hidden bg-[#0078e0] font-['Open_Sans','Noto_Sans',sans-serif] text-[11px]">
      <Wallpaper />
      <main className="relative flex-1">
        <DesktopIcons />
        <ArchiverWindow />
        <button className="absolute top-[113px] right-[81px] flex w-[74px] flex-col items-center gap-[3px] border border-[#7aa6e8] bg-[#4a80d8] pb-px text-white">
          <ShieldExeIcon className="h-[50px] w-12" />
          <span className="leading-[14px]">HSS.exe</span>
        </button>
        <Watermark />
      </main>
      <Taskbar />
    </div>
  );
}
